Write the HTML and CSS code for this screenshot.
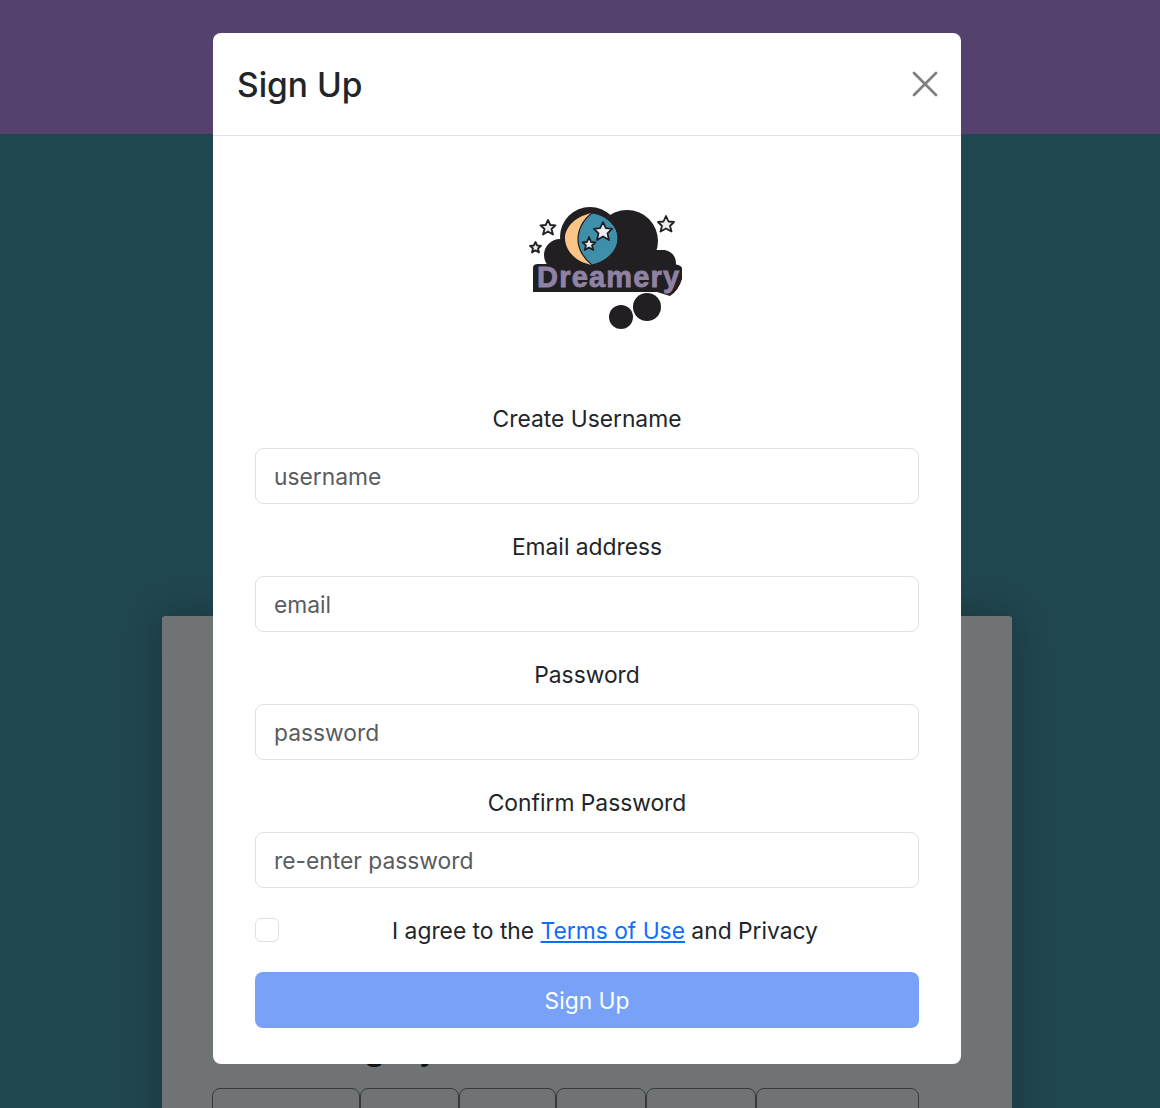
FILE: index.html
```html
<!DOCTYPE html>
<html>
<head>
  <meta charset="UTF-8">
  <meta name="viewport" content="width=device-width, initial-scale=1.0">
  <title>Dreamery</title>
  <link rel="stylesheet" href="styles.css">
</head>
<body>
  <header class="topbar"></header>
  <main class="page">
    <section class="card">
      <h2 class="card-title">Find Category</h2>
      <div class="tabs">
        <span class="tab tab-1">Nightmare</span>
        <span class="tab tab-2">Fear</span>
        <span class="tab tab-3">Social</span>
        <span class="tab tab-4">Work</span>
        <span class="tab tab-5">School</span>
        <span class="tab tab-6">Out of Body</span>
      </div>
    </section>
  </main>

  <div class="backdrop"></div>

  <div class="modal">
    <div class="modal-header">
      <h1 class="modal-title">Sign Up</h1>
      <svg class="close" width="26" height="26" viewBox="0 0 26 26">
        <path d="M2 2 L24 24 M24 2 L2 24" stroke="#808080" stroke-width="2.8" stroke-linecap="round"/>
      </svg>
    </div>
    <div class="modal-body">
      <svg class="logo" width="190" height="150" viewBox="-18 0 190 150">
        <!-- cloud -->
        <g fill="#221f23">
          <circle cx="80" cy="47" r="30"/>
          <circle cx="117" cy="51" r="31"/>
          <circle cx="50" cy="65" r="16"/>
          <circle cx="153" cy="73" r="13"/>
          <rect x="45" y="60" width="110" height="20"/>
          <path d="M23 78 Q23 74 28 74 L162 74 Q175 74 173 85 Q170 100 160 106 L147 102 L23 102 Z"/>
          <circle cx="137" cy="117" r="14"/>
          <circle cx="111" cy="127" r="12"/>
        </g>
        <!-- moon -->
        <path d="M82 23 C62 27 55 40 55 48 C55 60 65 72 82 75 C73 68 68 58 68 50 C68 40 73 30 82 23 Z" fill="#fbc587"/>
        <path d="M82 23 C98 25 108 37 108 48 C108 61 97 72 82 75 C73 68 68 58 68 50 C68 40 73 30 82 23 Z" fill="#3e8fa9" stroke="#221f23" stroke-width="1.2"/>
        <!-- stars -->
        <g fill="#e9eef0" stroke="#221f23" stroke-width="1.8" stroke-linejoin="round">
          <path d="M93 32 L95.800 38.200 L102 38.800 L97.500 43.300 L99 50 L93 46.500 L87 50 L88.500 43.300 L84 38.800 L90.200 38.200 Z"/>
          <path d="M79 47 L81 52 L85.500 52.300 L82 55.500 L83.300 60 L79 57.500 L74.700 60 L76 55.500 L72.500 52.300 L77 52 Z"/>
          <path d="M38 30 L40.300 35 L45.500 35.400 L41.500 39 L43 44.500 L38 41.500 L33 44.500 L34.500 39 L30.500 35.400 L35.700 35 Z"/>
          <path d="M25.500 52 L27.200 55.500 L31 55.800 L28 58.500 L29 62.500 L25.500 60.300 L22 62.500 L23 58.500 L20 55.800 L23.800 55.500 Z"/>
          <path d="M156 26 L158.500 31.500 L164 32 L160 36 L161.500 41.500 L156 38.500 L150.500 41.500 L152 36 L148 32 L153.500 31.500 Z"/>
        </g>
        <text class="logo-text" x="27" y="97">Dreamery</text>
      </svg>

      <form class="form">
        <label class="field-label">Create Username</label>
        <input class="field" type="text" placeholder="username">
        <label class="field-label">Email address</label>
        <input class="field" type="text" placeholder="email">
        <label class="field-label">Password</label>
        <input class="field" type="text" placeholder="password">
        <label class="field-label">Confirm Password</label>
        <input class="field" type="text" placeholder="re-enter password">
        <div class="agree">
          <span class="check"></span>
          <span class="agree-text">I agree to the <a href="#">Terms of Use</a> and Privacy</span>
        </div>
        <button class="submit" type="button">Sign Up</button>
      </form>
    </div>
  </div>
</body>
</html>
```

FILE: styles.css
```css
html, body {
  margin: 0;
  height: 100%;
  overflow: hidden;
}
body {
  font-family: Inter, "Liberation Sans", sans-serif;
  color: #212529;
  background-color: #418d9f;
}
.topbar {
  height: 134px;
  background-color: #a883dd;
}
.page {
  padding: 482px 148px 0 162px;
}
.card {
  background-color: #dee6e6;
  border-radius: 3px;
  box-shadow: 0 0 40px rgba(0, 0, 0, 0.25);
  padding: 413px 50px 0;
  height: 700px;
  box-sizing: border-box;
}
.card-title {
  margin: 0 0 21px;
  font-size: 33.5px;
  line-height: 38px;
  font-weight: 500;
  color: #212529;
}
.tabs {
  display: flex;
}
.tab {
  box-sizing: border-box;
  height: 56px;
  padding-top: 16px;
  text-align: center;
  font-size: 22.8px;
  line-height: 28px;
  border: 1px solid #6c757d;
  border-radius: 8px;
}
.tab-1 { width: 148px; }
.tab-2 { width: 99px; }
.tab-3 { width: 97px; }
.tab-4 { width: 90px; }
.tab-5 { width: 110px; }
.tab-6 { width: 163px; }

.backdrop {
  position: fixed;
  inset: 0;
  background-color: #000;
  opacity: 0.5;
}
.modal {
  position: fixed;
  top: 33px;
  left: 213px;
  width: 748px;
  height: 1031px;
  background-color: #fff;
  border-radius: 8px;
}
.modal-header {
  display: flex;
  justify-content: space-between;
  align-items: center;
  height: 102px;
  padding: 0 23px 0 24px;
  border-bottom: 1px solid #dee2e6;
}
.modal-title {
  margin: 2px 0 0;
  font-size: 33.5px;
  line-height: 38px;
  font-weight: 500;
}
.modal-body {
  padding: 0 42px;
}
.logo {
  display: block;
  margin: 54px auto 0;
}
.form {
  display: flex;
  flex-direction: column;
  margin-top: 61px;
}
.field-label {
  text-align: center;
  font-size: 22.8px;
  line-height: 36px;
  margin-bottom: 11px;
}
.field {
  box-sizing: border-box;
  height: 56px;
  padding: 0 18px;
  margin-bottom: 25px;
  font-family: inherit;
  font-size: 22.8px;
  border: 1px solid #dee2e6;
  border-radius: 8px;
  background-color: #fff;
  color: #212529;
}
.field::placeholder {
  color: #595c5f;
  opacity: 1;
}
.agree {
  display: flex;
  align-items: center;
  height: 34px;
  margin-bottom: 25px;
}
.check {
  width: 24px;
  height: 24px;
  box-sizing: border-box;
  border: 1px solid #dee2e6;
  border-radius: 6px;
}
.agree-text {
  flex: 1;
  padding-left: 12px;
  text-align: center;
  font-size: 22.8px;
}
.agree-text a {
  color: #0d6efd;
}
.submit {
  height: 56px;
  border: none;
  border-radius: 8px;
  background-color: #77a2f8;
  color: #fff;
  font-family: inherit;
  font-size: 22.8px;
}
.logo-text {
  font-family: "Liberation Sans", sans-serif;
  font-weight: 700;
  font-size: 29px;
  letter-spacing: 1.2px;
  fill: #8f82a3;
  stroke: #8f82a3;
  stroke-width: 0.8px;
}
```
